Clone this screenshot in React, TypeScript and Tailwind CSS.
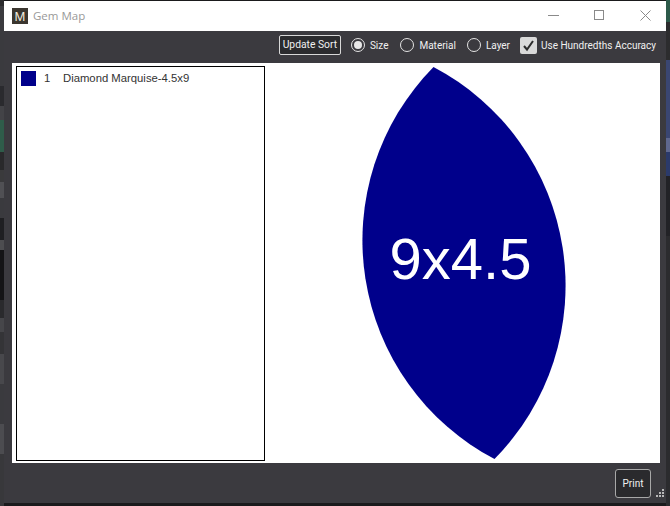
const ui = "font-['Roboto','Open_Sans',sans-serif]";

const leftStrip: [number, string][] = [
  [6, "#2b2b2d"], [80, "#3a3a3e"], [20, "#2a2a2e"], [14, "#434347"], [32, "#2f5c4a"], [18, "#29292b"], [12, "#3a3a3c"], [16, "#505054"],
  [20, "#3a3a3e"], [22, "#1f1f22"], [10, "#4d4d50"], [50, "#141416"], [18, "#2a2a2d"], [14, "#46464a"], [22, "#343437"], [30, "#48484c"],
  [40, "#3a3a3e"], [30, "#4c4c50"], [52, "#38383b"],
];
const rightStrip: [number, string][] = [
  [22, "#2d5a4a"], [38, "#2c2c2e"], [78, "#3a4672"], [14, "#5f688f"], [24, "#2b3a6a"], [60, "#222226"], [270, "#2b2b2e"],
];

function Strip({ items }: { items: [number, string][] }) {
  return (
    <div className="flex h-full w-[4px] shrink-0 flex-col overflow-hidden">
      {items.map(([h, c], i) => (
        <div key={i} className="w-full shrink-0" style={{ height: h, backgroundColor: c }} />
      ))}
    </div>
  );
}

function Radio({ label, on, className }: { label: string; on?: boolean; className?: string }) {
  return (
    <div className={`flex items-center gap-[5px] ${className ?? ""}`}>
      <span className="flex h-[14px] w-[14px] items-center justify-center rounded-full border border-[#e4e4e4]">
        {on && <span className="h-[8px] w-[8px] rounded-full bg-[#e8e8e8]" />}
      </span>
      <span>{label}</span>
    </div>
  );
}

export default function App() {
  return (
    <div className={`flex h-[506px] w-[670px] overflow-hidden bg-[#1a1a1c] ${ui}`}>
      <Strip items={leftStrip} />
      <div className="flex h-full w-[662px] shrink-0 flex-col pb-[3px] pt-[1px]">
        <div className="flex h-full flex-col bg-[#3b3a3f]">
          <div className="flex h-[30px] shrink-0 items-center bg-white pl-[8px]">
            <div className="flex h-[16px] w-[16px] items-center justify-center bg-[#3b362f] font-['Liberation_Sans'] text-[13px] leading-none text-[#efe9dc]">M</div>
            <span className="ml-[5px] font-['Open_Sans'] text-[11.5px] text-[#999]">Gem Map</span>
            <div className="ml-auto flex items-center text-[#8a8a8a]">
              <svg width="138" height="30" viewBox="0 0 138 30" fill="none" stroke="currentColor" strokeWidth="1">
                <path d="M20 14.5H31" />
                <rect x="66.5" y="9.5" width="9" height="9" />
                <path d="M112.5 9.5L122.5 19.5M122.5 9.5L112.5 19.5" />
              </svg>
            </div>
          </div>
          <div className="flex h-[32px] shrink-0 items-center justify-end gap-[12px] pb-[4px] pr-[10px] text-[10px] text-[#f0f0f0]">
            <button className="mr-[-2px] h-[20px] w-[62px] rounded-[2px] border border-[#d8d8d8] bg-[#2b2b2e] text-center text-[10.3px] leading-none">Update Sort</button>
            <Radio label="Size" on />
            <Radio label="Material" />
            <Radio label="Layer" className="ml-[-1px]" />
            <div className="ml-[-2px] flex items-center gap-[4px]">
              <span className="flex h-[17px] w-[17px] items-center justify-center rounded-[2px] bg-[#d9d9d9]">
                <svg width="13" height="13" viewBox="0 0 13 13" fill="none" stroke="#2b2b2b" strokeWidth="2"><path d="M2 7l3 3.5L11 2" /></svg>
              </span>
              <span>Use Hundredths Accuracy</span>
            </div>
          </div>
          <div className="ml-[8px] mr-[6px] flex h-[400px] shrink-0 bg-white pl-[4px] pt-[3px]">
            <div className="h-[395px] w-[249px] shrink-0 border border-black pl-[4px] pt-[4px] font-['Liberation_Sans']">
              <div className="flex items-start text-[11.3px] leading-[15px] text-[#333]">
                <span className="h-[15px] w-[15px] bg-[#00008b]" />
                <span className="ml-[8px] w-[19px]">1</span>
                <span>Diamond Marquise-4.5x9</span>
              </div>
            </div>
            <svg width="392" height="395" viewBox="265 66 392 395" className="shrink-0">
              <path d="M433.5 67A247 247 0 0 1 494.5 459A247 247 0 0 1 433.5 67Z" fill="#00008b" />
              <text x="460.5" y="279" textAnchor="middle" fill="#fff" fontSize="58" fontFamily="Liberation Sans, Arial, sans-serif">9x4.5</text>
            </svg>
          </div>
          <div className="relative flex flex-1 items-center justify-end pr-[15px]">
            <button className="h-[29px] w-[36px] rounded-[3px] border border-[#a8a8a8] bg-[#2a2a2d] text-[10px] text-[#f0f0f0]">Print</button>
            <svg className="absolute bottom-[5px] right-[1px]" width="10" height="10" viewBox="0 0 10 10" fill="#b8b8b8">
              <rect x="7" y="1" width="2" height="2" /><rect x="4" y="4" width="2" height="2" /><rect x="7" y="4" width="2" height="2" />
              <rect x="1" y="7" width="2" height="2" /><rect x="4" y="7" width="2" height="2" /><rect x="7" y="7" width="2" height="2" />
            </svg>
          </div>
        </div>
      </div>
      <Strip items={rightStrip} />
    </div>
  );
}
